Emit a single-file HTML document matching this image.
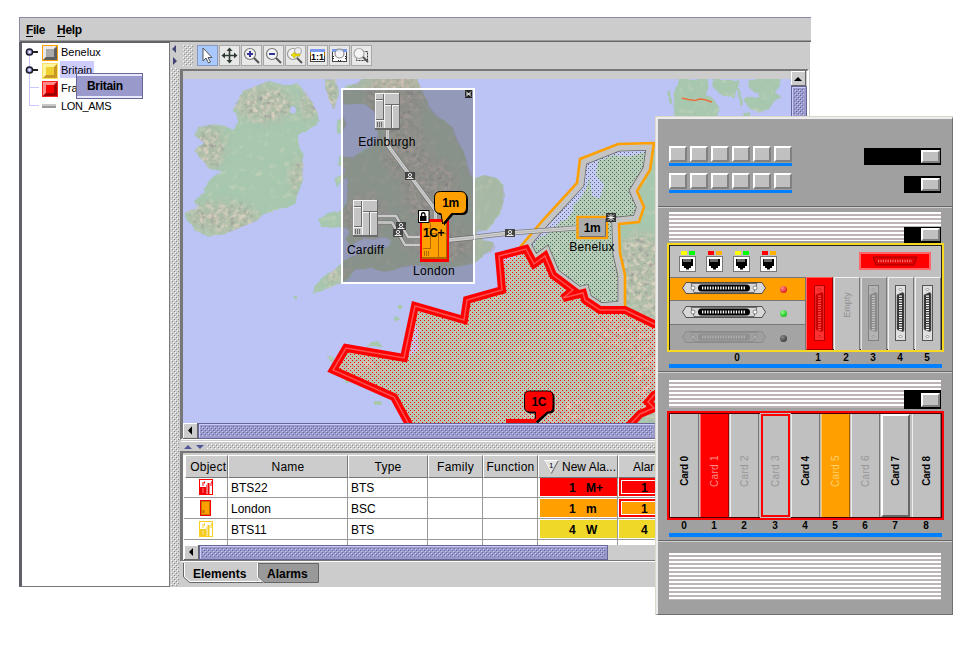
<!DOCTYPE html><html><head><meta charset="utf-8"><title>Network</title><style>
*{box-sizing:border-box;margin:0;padding:0}
html,body{width:980px;height:650px;background:#fff;overflow:hidden}
body{position:relative;font-family:"Liberation Sans",sans-serif;font-size:11px;color:#000}
.a{position:absolute}
#win{left:19px;top:17px;width:791px;height:570px;background:#ccc;border-left:1px solid #8a8aa8;border-top:1px solid #8a8aa8}
.menu{font-weight:bold;font-size:12px;top:23px}
.menu u{text-decoration:none;display:inline-block;height:14px;line-height:14px;border-bottom:1px solid #000}
#tree{left:19px;top:42px;width:151px;height:545px;background:#fff;border-left:3px solid #60606a;border-top:1px solid #60606a;border-right:1px solid #777;border-bottom:1px solid #777}
.tl{font-size:11px;line-height:18px;white-space:nowrap}
.dots{background-image:radial-gradient(circle at 1px 1px,#fff 0.8px,transparent 1px),radial-gradient(circle at 2px 2px,#888 0.8px,transparent 1px);background-size:4px 4px}
.tb{top:45px;width:21px;height:21px;background:#e8e8e8;border:1px solid #a8a8a8}
.hd{top:455px;height:23px;background:#ccc;border-top:1px solid #fff;border-left:1px solid #fff;border-right:1px solid #777;border-bottom:1px solid #777;font-size:12px;text-align:center;line-height:23px;white-space:nowrap;overflow:hidden;letter-spacing:0.25px}
.cell{font-size:12px;line-height:19px;white-space:nowrap}
.sb{background-color:#9999cc;background-image:conic-gradient(#b4b4dc 25%,#9090c4 0 50%,#b4b4dc 0 75%,#9090c4 0);background-size:2px 2px}
.sbtn{background:#ccc;border-top:1px solid #fff;border-left:1px solid #fff;border-right:1px solid #666;border-bottom:1px solid #666}
</style></head><body><div id="win" class="a"></div><div class="a" style="left:810px;top:17px;width:1px;height:25px;background:#ccc;border-top:1px solid #8a8aa8"></div><div class="a" style="left:20px;top:40px;width:791px;height:1px;background:#999"></div><div class="a" style="left:20px;top:41px;width:791px;height:1px;background:#666"></div><div class="a menu" style="left:26px;letter-spacing:-0.45px"><u>F</u>ile</div><div class="a menu" style="left:57px;letter-spacing:-0.3px"><u>H</u>elp</div><div id="tree" class="a"></div><div class="a" style="left:29px;top:56px;width:1px;height:49px;background:#c8c8ff"></div><div class="a" style="left:29px;top:87px;width:10px;height:1px;background:#c8c8ff"></div><div class="a" style="left:29px;top:105px;width:10px;height:1px;background:#c8c8ff"></div><svg class="a" style="left:25px;top:47px" width="14" height="10" viewBox="0 0 14 10"><circle cx="4.5" cy="5" r="3.1" fill="#9c9cdc" stroke="#1a1a2a" stroke-width="1.5"/><circle cx="4.5" cy="5" r="1.1" fill="#fff"/><rect x="8" y="4" width="5" height="2" fill="#222"/></svg><svg class="a" style="left:25px;top:65px" width="14" height="10" viewBox="0 0 14 10"><circle cx="4.5" cy="5" r="3.1" fill="#9c9cdc" stroke="#1a1a2a" stroke-width="1.5"/><circle cx="4.5" cy="5" r="1.1" fill="#fff"/><rect x="8" y="4" width="5" height="2" fill="#222"/></svg><svg class="a" style="left:42px;top:45px" width="16" height="16" viewBox="0 0 16 16"><rect width="16" height="16" fill="#ffa000"/><polygon points="1,1 15,1 1,15" fill="#e8e8e8"/><polygon points="15,1 15,15 1,15" fill="#606060"/><rect x="4" y="4" width="8" height="8" fill="#aaaaaa"/></svg><svg class="a" style="left:42px;top:63px" width="16" height="16" viewBox="0 0 16 16"><rect width="16" height="16" fill="#ffe060"/><polygon points="1,1 15,1 1,15" fill="#fff7a0"/><polygon points="15,1 15,15 1,15" fill="#c89828"/><rect x="4" y="4" width="8" height="8" fill="#f0d030"/></svg><svg class="a" style="left:42px;top:81px" width="16" height="16" viewBox="0 0 16 16"><rect width="16" height="16" fill="#ff2020"/><polygon points="1,1 15,1 1,15" fill="#ff8888"/><polygon points="15,1 15,15 1,15" fill="#a00000"/><rect x="4" y="4" width="8" height="8" fill="#ff0000"/></svg><div class="a" style="left:42px;top:104px;width:14px;height:2px;background:#c8c8c8"></div><div class="a" style="left:42px;top:106px;width:14px;height:2px;background:#999"></div><div class="a" style="left:60px;top:61px;width:34px;height:17px;background:#ccccff"></div><div class="a tl" style="left:61px;top:43px">Benelux</div><div class="a tl" style="left:61px;top:61px">Britain</div><div class="a tl" style="left:61px;top:79px">France</div><div class="a tl" style="left:61px;top:97px;letter-spacing:-0.35px">LON_AMS</div><div class="a" style="left:76px;top:73px;width:67px;height:26px;background:#9999cc;border:1px solid #666699;box-shadow:inset 0 2px 0 #e8e8ff,inset 0 -2px 0 #e8e8ff;font-weight:bold;font-size:12px;line-height:25px;padding-left:10px;letter-spacing:-0.3px">Britain</div><svg class="a" style="left:0;top:0" width="0" height="0"><defs><pattern id="dt" width="4" height="4" patternUnits="userSpaceOnUse"><rect width="4" height="4" fill="#ccc"/><rect x="0" y="0" width="1" height="1" fill="#fff"/><rect x="1" y="1" width="1" height="1" fill="#8c8c8c"/><rect x="2" y="2" width="1" height="1" fill="#fff"/><rect x="3" y="3" width="1" height="1" fill="#8c8c8c"/></pattern><pattern id="st" width="4" height="4" patternUnits="userSpaceOnUse"><rect width="4" height="4" fill="#9999cc"/><rect x="0" y="0" width="1" height="1" fill="#ccccff"/><rect x="1" y="1" width="1" height="1" fill="#666699"/><rect x="2" y="2" width="1" height="1" fill="#ccccff"/><rect x="3" y="3" width="1" height="1" fill="#666699"/></pattern></defs></svg><svg class="a" style="left:171px;top:68px" width="8" height="518"><rect width="8" height="518" fill="url(#dt)"/></svg><svg class="a" style="left:171px;top:42px" width="9" height="26" viewBox="0 0 9 26"><polygon points="5,3 5,11 1,7" fill="#444477"/><polygon points="2,15 2,23 6,19" fill="#444477"/></svg><div class="a" style="left:181px;top:42px;width:629px;height:28px;background:#ccc"></div><svg class="a" style="left:183px;top:45px" width="10" height="21"><rect width="10" height="21" fill="url(#dt)"/></svg><div class="a tb" style="left:197px;background:#a8c8ff;border-color:#8899bb;"></div><div class="a tb" style="left:219px;"></div><div class="a tb" style="left:241px;"></div><div class="a tb" style="left:263px;"></div><div class="a tb" style="left:285px;"></div><div class="a tb" style="left:307px;"></div><div class="a tb" style="left:329px;"></div><div class="a tb" style="left:351px;"></div>
<svg class="a" style="left:197px;top:45px" width="176" height="21" viewBox="0 0 176 21">
<!-- pointer -->
<polygon points="6,3 6,16 9,13 11.5,18 13.5,17 11,12.5 15,12.5" fill="#fff" stroke="#555" stroke-width="1"/>
<!-- move -->
<g stroke="#2e3c32" stroke-width="1.6" fill="none"><path d="M32.5 4v13M26 10.5h13"/></g>
<g fill="#2e3c32"><polygon points="32.5,2.5 29.5,6 35.5,6"/><polygon points="32.5,18.5 29.5,15 35.5,15"/><polygon points="24.5,10.5 28,7.5 28,13.5"/><polygon points="40.5,10.5 37,7.5 37,13.5"/></g>
<!-- zoom in -->
<circle cx="53" cy="9" r="5.5" fill="#f4f4f4" stroke="#777" stroke-width="1.2"/><path d="M57 13l5 5" stroke="#555" stroke-width="2"/><path d="M50 9h6M53 6v6" stroke="#333399" stroke-width="2"/>
<!-- zoom out -->
<circle cx="75" cy="9" r="5.5" fill="#f4f4f4" stroke="#777" stroke-width="1.2"/><path d="M79 13l5 5" stroke="#555" stroke-width="2"/><path d="M72 9h6" stroke="#333399" stroke-width="2"/>
<!-- zoom back -->
<circle cx="96" cy="9" r="5.5" fill="#f4f4f4" stroke="#999" stroke-width="1.2"/><circle cx="101" cy="6" r="3.5" fill="#eee" stroke="#aaa" stroke-width="1"/><path d="M100 13l5 5" stroke="#555" stroke-width="2"/><path d="M94 10l4-3v2h5v2h-5v2z" fill="#f0e000" stroke="#b0a000" stroke-width=".5"/>
<!-- 1:1 -->
<rect x="113.500" y="4.500" width="14" height="12" fill="#fff" stroke="#444" stroke-width="1"/><rect x="113" y="4" width="15" height="3" fill="#7799ee"/><rect x="113" y="7" width="1" height="4" fill="#b07000"/><rect x="127" y="7" width="1" height="4" fill="#b07000"/>
<text x="120.500" y="15" font-family="Liberation Sans,sans-serif" font-size="9" font-weight="bold" text-anchor="middle" fill="#000">1:1</text>
<!-- fit -->
<rect x="135.500" y="4.500" width="14" height="12" fill="#fff" stroke="#444" stroke-width="1"/><rect x="135" y="4" width="15" height="3" fill="#7799ee"/><circle cx="142.500" cy="8.500" r="4.500" fill="#f4f4f4" fill-opacity=".8" stroke="#888" stroke-width="1.2"/><path d="M137 11l-1.500 1.500 1.500 1.500M148 11l1.500 1.500-1.500 1.500M141 15l1.500 1.500 1.500-1.500" stroke="#222" stroke-width="1" fill="none"/>
<!-- zoom area -->
<rect x="159.500" y="6.500" width="11" height="9" fill="none" stroke="#333" stroke-width="1" stroke-dasharray="2 1"/><circle cx="162" cy="8.500" r="5" fill="#f4f4f4" stroke="#aaa" stroke-width="1.200"/><path d="M166 12l5 5" stroke="#555" stroke-width="2"/>
</svg>
<div class="a" style="left:180px;top:69px;width:629px;height:371px;background:#ccc;border-left:3px solid #777;border-top:2px solid #777;border-right:2px solid #fff;border-bottom:2px solid #fff"></div><svg class="a" style="left:183px;top:71px" width="608" height="352" viewBox="183 71 608 352"><defs>
<pattern id="rd" width="4" height="4" patternUnits="userSpaceOnUse"><rect x="0" y="0" width="1" height="1" fill="#f00"/><rect x="2" y="2" width="1" height="1" fill="#f00"/></pattern>
<pattern id="bd" width="4" height="4" patternUnits="userSpaceOnUse"><rect x="0" y="0" width="1" height="1" fill="#4a4a4a"/><rect x="2" y="2" width="1" height="1" fill="#4a4a4a"/></pattern>
<filter id="terr" x="0" y="0" width="100%" height="100%" color-interpolation-filters="sRGB">
<feTurbulence type="fractalNoise" baseFrequency="0.045" numOctaves="3" seed="3" result="dn"/>
<feDisplacementMap in="SourceGraphic" in2="dn" scale="7" xChannelSelector="R" yChannelSelector="G" result="land"/>
<feTurbulence type="fractalNoise" baseFrequency="0.13" numOctaves="2" seed="11" result="n"/>
<feColorMatrix in="n" type="matrix" values="0 0 0 0 0.76  0 0 0 0 0.82  0 0 0 0 0.72  3 0 0 0 -1.75" result="tan"/>
<feMerge result="col"><feMergeNode in="land"/><feMergeNode in="tan"/></feMerge>
<feComposite in="col" in2="land" operator="in"/>
</filter>
<filter id="hills" x="0" y="0" width="100%" height="100%" color-interpolation-filters="sRGB">
<feGaussianBlur in="SourceGraphic" stdDeviation="5" result="m"/>
<feTurbulence type="fractalNoise" baseFrequency="0.21" numOctaves="3" seed="5" result="n"/>
<feColorMatrix in="n" type="matrix" values="0 0 0 0 0.85  0 0 0 0 0.82  0 0 0 0 0.75  3 0 0 0 -1.25" result="tan"/>
<feColorMatrix in="n" type="matrix" values="0 0 0 0 0.56  0 0 0 0 0.54  0 0 0 0 0.56  0 2.2 0 0 -1.22" result="dk0"/>
<feOffset in="dk0" dx="1" dy="1" result="dk"/>
<feComposite in="tan" in2="m" operator="in" result="t2"/>
<feComposite in="dk" in2="m" operator="in" result="d2"/>
<feColorMatrix in="m" type="matrix" values="1 0 0 0 0  0 1 0 0 0  0 0 1 0 0  0 0 0 0.5 0" result="m2"/>
<feMerge><feMergeNode in="m2"/><feMergeNode in="t2"/><feMergeNode in="d2"/></feMerge>
</filter>
<clipPath id="mapclip"><rect x="183" y="79" width="608" height="344"/></clipPath>
</defs><rect x="183" y="79" width="608" height="344" fill="#bbc4f5"/><g clip-path="url(#mapclip)"><g filter="url(#terr)" fill="#a7c7af"><polygon points="269,80 281,85.5 298,84 306,91 311,101 317.5,111.5 319,119.5 314,127 306,131 298,135 299,145.5 303,156 304,166.5 302,179.5 298,190 295.5,203 287.5,208 272,209.5 264,213.5 259,220 243,226.5 225,234.5 209,236 196,232 189.5,221.5 185.5,212 198.5,205.5 193.5,200.5 206.5,194 204,190 212,179.5 222,171.5 209,169 198.5,156 195,151 204,143 195,135 198.5,126 212,123.5 225,126 232.5,128.5 239,121 232.5,110.5 236.5,101 244.5,90.5 256,85.5"/><polygon points="326,79 337,79 339,95 334,110 329,100 325,88"/><polygon points="336,120 344,117 347,124 343,133 337,134"/><polygon points="362,79 417,79 422,90 430,107 441,119 453,127 459,142 465,155 469,168 474,179 485,175 496,178 503,186 505,196 502,208 497,216 492,224 486,230 476,233 474,236 484,240 493,242 496,247 492,252 484,255 478,260 474,264 460,266 440,268 420,266 400,268 385,272 370,268 355,270 342,282 327,290 312,294 316,286 330,274 342,262 352,256 365,250 378,248 390,246 392,240 384,238 374,240 364,239 356,243 350,245 346,240 350,232 346,228 332,229 322,227 320,218 332,212 343,210 347,203 347,181 343,178 335,187 334,178 343,172 343,166 336,165 337,155 343,157 352,156.5 362,154 374,144 378,132 374,112 364,103.5 343,104.7 341,97 345,89 354,84"/><polygon points="340,352 352,346 365,350 380,356 395,358 402,355 412,353 419,348 419,333 416,322 412,309 420,307 430,312 445,317 458,320 464,313 468,302 485,296 498,290 502,275 505,262 515,256 528,250 545,235 560,222 572,208 582,196 588,180 592,168 600,160 615,156 630,156 645,152 657,150 800,146 800,430 412,430 409,423 400,405 392,396 375,388 360,382 345,375 336,368 334,360"/><polygon points="680,79 707,79 709,87 706,94 716,100 719,108 717,118 676,118 673,108 674,97 678,88"/><polygon points="713,79 739,79 740,86 737,90 735,97 732,100 726,97 723,98 716,91 712,86"/><polygon points="748,79 781,79 780,86 775,92 783,95 776,100 769,108 759,112 748,108 742,101 746,97 758,96 759,93 750,90 747,86"/><polygon points="737,88 740,88 742,105 739,106"/><polygon points="743,114 750,113 751,118 744,118"/><polygon points="668,92 671,90 672,104 669,106"/><polygon points="294,297 297,297 297,300 294,300"/><polygon points="392,316 398,315 399,319 393,320"/><polygon points="398,306 402,306 402,309 398,309"/><polygon points="366,349 370,342 380,341 385,347"/><polygon points="327,357 332,356 333,361 328,362"/><polygon points="347,381 351,381 351,384 347,384"/><polygon points="375,401 381,401 381,404 375,404"/></g><clipPath id="landclip"><polygon points="269,80 281,85.5 298,84 306,91 311,101 317.5,111.5 319,119.5 314,127 306,131 298,135 299,145.5 303,156 304,166.5 302,179.5 298,190 295.5,203 287.5,208 272,209.5 264,213.5 259,220 243,226.5 225,234.5 209,236 196,232 189.5,221.5 185.5,212 198.5,205.5 193.5,200.5 206.5,194 204,190 212,179.5 222,171.5 209,169 198.5,156 195,151 204,143 195,135 198.5,126 212,123.5 225,126 232.5,128.5 239,121 232.5,110.5 236.5,101 244.5,90.5 256,85.5"/><polygon points="326,79 337,79 339,95 334,110 329,100 325,88"/><polygon points="336,120 344,117 347,124 343,133 337,134"/><polygon points="362,79 417,79 422,90 430,107 441,119 453,127 459,142 465,155 469,168 474,179 485,175 496,178 503,186 505,196 502,208 497,216 492,224 486,230 476,233 474,236 484,240 493,242 496,247 492,252 484,255 478,260 474,264 460,266 440,268 420,266 400,268 385,272 370,268 355,270 342,282 327,290 312,294 316,286 330,274 342,262 352,256 365,250 378,248 390,246 392,240 384,238 374,240 364,239 356,243 350,245 346,240 350,232 346,228 332,229 322,227 320,218 332,212 343,210 347,203 347,181 343,178 335,187 334,178 343,172 343,166 336,165 337,155 343,157 352,156.5 362,154 374,144 378,132 374,112 364,103.5 343,104.7 341,97 345,89 354,84"/><polygon points="340,352 352,346 365,350 380,356 395,358 402,355 412,353 419,348 419,333 416,322 412,309 420,307 430,312 445,317 458,320 464,313 468,302 485,296 498,290 502,275 505,262 515,256 528,250 545,235 560,222 572,208 582,196 588,180 592,168 600,160 615,156 630,156 645,152 657,150 800,146 800,430 412,430 409,423 400,405 392,396 375,388 360,382 345,375 336,368 334,360"/><polygon points="680,79 707,79 709,87 706,94 716,100 719,108 717,118 676,118 673,108 674,97 678,88"/></clipPath><g clip-path="url(#landclip)"><g filter="url(#hills)" fill="#b4b2a0"><ellipse cx="430" cy="190" rx="28" ry="34"/><ellipse cx="440" cy="245" rx="34" ry="16"/><ellipse cx="395" cy="100" rx="30" ry="28"/><ellipse cx="405" cy="150" rx="22" ry="30"/><ellipse cx="365" cy="215" rx="22" ry="22"/><ellipse cx="335" cy="275" rx="14" ry="8"/><ellipse cx="330" cy="95" rx="10" ry="18"/><ellipse cx="264" cy="104" rx="28" ry="18"/><ellipse cx="210" cy="147" rx="15" ry="20"/><ellipse cx="222" cy="218" rx="36" ry="15"/><ellipse cx="298" cy="177" rx="7" ry="18"/><ellipse cx="309" cy="104" rx="8" ry="16"/><ellipse cx="640" cy="270" rx="26" ry="38"/><ellipse cx="650" cy="360" rx="22" ry="60"/><ellipse cx="560" cy="415" rx="40" ry="18"/><ellipse cx="610" cy="330" rx="20" ry="20"/><ellipse cx="365" cy="365" rx="22" ry="8"/></g></g><g clip-path="url(#landclip)"><rect x="343" y="79" width="165" height="215" fill="#a88480" fill-opacity="0.2"/></g><polyline points="682,98 688,99.500 695,100.500 700,99 704,99.500 712,102" fill="none" stroke="#e8703c" stroke-width="1.500"/><ellipse cx="293" cy="110" rx="3" ry="3.500" fill="#bbc4f5"/><polygon points="590,153 598,160 596,175 604,185 600,198 592,196 590,180 588,165" fill="#bbc4f5"/><polygon points="555,210 566,204 574,210 566,220 556,222" fill="#bbc4f5"/><polygon points="521,246 543,220 577,183 580,159 618,144 654,143 650,170 637,191 644,207 639,222 619,224 620,253 625,275 625,308 600,310 585,300 583,293 563,298 573,290 553,275 545,256 534,264 526,249" fill="#fff" fill-opacity="0.12"/><polygon points="521,246 543,220 577,183 580,159 618,144 654,143 650,170 637,191 644,207 639,222 619,224 620,253 625,275 625,308 600,310 585,300 583,293 563,298 573,290 553,275 545,256 534,264 526,249" fill="url(#bd)" fill-opacity="0.8"/><clipPath id="bclip"><polygon points="521,246 543,220 577,183 580,159 618,144 654,143 650,170 637,191 644,207 639,222 619,224 620,253 625,275 625,308 600,310 585,300 583,293 563,298 573,290 553,275 545,256 534,264 526,249"/></clipPath><g clip-path="url(#bclip)"><polygon points="521,246 543,220 577,183 580,159 618,144 654,143 650,170 637,191 644,207 639,222 619,224 620,253 625,275 625,308 600,310 585,300 583,293 563,298 573,290 553,275 545,256 534,264 526,249" fill="none" stroke="#666" stroke-width="15" stroke-linejoin="miter"/><polygon points="521,246 543,220 577,183 580,159 618,144 654,143 650,170 637,191 644,207 639,222 619,224 620,253 625,275 625,308 600,310 585,300 583,293 563,298 573,290 553,275 545,256 534,264 526,249" fill="none" stroke="#c4c4c4" stroke-width="13.500" stroke-linejoin="miter"/></g><polygon points="521,246 543,220 577,183 580,159 618,144 654,143 650,170 637,191 644,207 639,222 619,224 620,253 625,275 625,308 600,310 585,300 583,293 563,298 573,290 553,275 545,256 534,264 526,249" fill="none" stroke="#ffa000" stroke-width="2.600" stroke-linejoin="miter"/><polygon points="333,370 346,348 404,358 415,306 464,320 467,300 502,290 499,256 526,249 534,264 545,256 553,275 573,290 563,298 583,293 585,300 600,310 625,310 654,324 700,330 700,380 654,395 648,402 654,408 640,414 625,430 412,430 394,397" fill="#dcc4bc" fill-opacity="0.33"/><polygon points="333,370 346,348 404,358 415,306 464,320 467,300 502,290 499,256 526,249 534,264 545,256 553,275 573,290 563,298 583,293 585,300 600,310 625,310 654,324 700,330 700,380 654,395 648,402 654,408 640,414 625,430 412,430 394,397" fill="url(#rd)"/><polygon points="333,370 346,348 404,358 415,306 464,320 467,300 502,290 499,256 526,249 534,264 545,256 553,275 573,290 563,298 583,293 585,300 600,310 625,310 654,324 700,330 700,380 654,395 648,402 654,408 640,414 625,430 412,430 394,397" fill="none" stroke="#f00" stroke-width="8" stroke-linejoin="miter"/><polygon points="333,370 346,348 404,358 415,306 464,320 467,300 502,290 499,256 526,249 534,264 545,256 553,275 573,290 563,298 583,293 585,300 600,310 625,310 654,324 700,330 700,380 654,395 648,402 654,408 640,414 625,430 412,430 394,397" fill="none" stroke="#ff5050" stroke-width="1.500" stroke-linejoin="miter"/><g font-family="Liberation Sans,sans-serif"><polyline points="449,240 510,233 576,228" fill="none" stroke="#777" stroke-width="5" stroke-linejoin="round"/><polyline points="449,240 510,233 576,228" fill="none" stroke="#d4d4d4" stroke-width="3.4" stroke-linejoin="round"/><polyline points="449,240 510,233 576,228" fill="none" stroke="#bdbdbd" stroke-width="1.6" stroke-linejoin="round"/><rect x="342" y="89" width="132" height="194" fill="#5c5c66" fill-opacity="0.42" stroke="#fff" stroke-width="2"/><polyline points="387.5,130 387.5,145 435.5,210 435.5,222" fill="none" stroke="#777" stroke-width="5" stroke-linejoin="round"/><polyline points="387.5,130 387.5,145 435.5,210 435.5,222" fill="none" stroke="#d4d4d4" stroke-width="3.4" stroke-linejoin="round"/><polyline points="387.5,130 387.5,145 435.5,210 435.5,222" fill="none" stroke="#bdbdbd" stroke-width="1.6" stroke-linejoin="round"/><polyline points="378,216 396,216 408,237 421,237" fill="none" stroke="#777" stroke-width="4" stroke-linejoin="round"/><polyline points="378,216 396,216 408,237 421,237" fill="none" stroke="#d4d4d4" stroke-width="2.4" stroke-linejoin="round"/><polyline points="378,216 396,216 408,237 421,237" fill="none" stroke="#bdbdbd" stroke-width="0.8" stroke-linejoin="round"/><polyline points="378,222.5 392,222.5 405,245 421,245" fill="none" stroke="#777" stroke-width="4" stroke-linejoin="round"/><polyline points="378,222.5 392,222.5 405,245 421,245" fill="none" stroke="#d4d4d4" stroke-width="2.4" stroke-linejoin="round"/><polyline points="378,222.5 392,222.5 405,245 421,245" fill="none" stroke="#bdbdbd" stroke-width="0.8" stroke-linejoin="round"/><polyline points="449,240 474,237.5" fill="none" stroke="#777" stroke-width="5" stroke-linejoin="round"/><polyline points="449,240 474,237.5" fill="none" stroke="#d4d4d4" stroke-width="3.4" stroke-linejoin="round"/><polyline points="449,240 474,237.5" fill="none" stroke="#bdbdbd" stroke-width="1.6" stroke-linejoin="round"/><g transform="translate(405,172)"><rect width="10" height="8" fill="#444"/><circle cx="5" cy="3" r="1.6" fill="none" stroke="#fff" stroke-width="0.9"/><path d="M1.500 6.500h7M3 6.300l1.200-1.300M7 6.300l-1.200-1.300" stroke="#fff" stroke-width="0.9" fill="none"/></g><g transform="translate(396,222)"><rect width="10" height="8" fill="#444"/><circle cx="5" cy="3" r="1.6" fill="none" stroke="#fff" stroke-width="0.9"/><path d="M1.500 6.500h7M3 6.300l1.200-1.300M7 6.300l-1.200-1.300" stroke="#fff" stroke-width="0.9" fill="none"/></g><g transform="translate(393,229)"><rect width="10" height="8" fill="#444"/><circle cx="5" cy="3" r="1.6" fill="none" stroke="#fff" stroke-width="0.9"/><path d="M1.500 6.500h7M3 6.300l1.200-1.300M7 6.300l-1.200-1.300" stroke="#fff" stroke-width="0.9" fill="none"/></g><g transform="translate(505,229)"><rect width="10" height="8" fill="#444"/><circle cx="5" cy="3" r="1.6" fill="none" stroke="#fff" stroke-width="0.9"/><path d="M1.500 6.500h7M3 6.300l1.200-1.300M7 6.300l-1.200-1.300" stroke="#fff" stroke-width="0.9" fill="none"/></g><g transform="translate(375,93)"><rect x="0" y="0" width="25" height="37" fill="#c4c4c4"/><rect x="0" y="0" width="25" height="1" fill="#f4f4f4"/><rect x="0" y="0" width="1" height="37" fill="#f4f4f4"/><rect x="24" y="0" width="1" height="37" fill="#6a6a6a"/><rect x="0" y="35" width="25" height="2" fill="#6a6a6a"/><rect x="1" y="6" width="7" height="1" fill="#6a6a6a"/><rect x="1" y="7" width="7" height="1" fill="#f4f4f4"/><rect x="1" y="26" width="8" height="1" fill="#6a6a6a"/><rect x="1" y="27" width="8" height="1" fill="#f4f4f4"/><rect x="8" y="1" width="1" height="26" fill="#6a6a6a"/><rect x="9" y="1" width="1" height="34" fill="#f4f4f4"/><rect x="2" y="29" width="1" height="5" fill="#6a6a6a"/><rect x="4" y="29" width="1" height="5" fill="#6a6a6a"/><rect x="6" y="29" width="1" height="5" fill="#6a6a6a"/><rect x="10" y="11" width="14" height="1" fill="#6a6a6a"/><rect x="10" y="12" width="14" height="1" fill="#f4f4f4"/><rect x="16" y="12" width="1" height="23" fill="#6a6a6a"/><rect x="17" y="12" width="1" height="23" fill="#f4f4f4"/></g><g transform="translate(353,200)"><rect x="0" y="0" width="25" height="37" fill="#c4c4c4"/><rect x="0" y="0" width="25" height="1" fill="#f4f4f4"/><rect x="0" y="0" width="1" height="37" fill="#f4f4f4"/><rect x="24" y="0" width="1" height="37" fill="#6a6a6a"/><rect x="0" y="35" width="25" height="2" fill="#6a6a6a"/><rect x="1" y="6" width="7" height="1" fill="#6a6a6a"/><rect x="1" y="7" width="7" height="1" fill="#f4f4f4"/><rect x="1" y="26" width="8" height="1" fill="#6a6a6a"/><rect x="1" y="27" width="8" height="1" fill="#f4f4f4"/><rect x="8" y="1" width="1" height="26" fill="#6a6a6a"/><rect x="9" y="1" width="1" height="34" fill="#f4f4f4"/><rect x="2" y="29" width="1" height="5" fill="#6a6a6a"/><rect x="4" y="29" width="1" height="5" fill="#6a6a6a"/><rect x="6" y="29" width="1" height="5" fill="#6a6a6a"/><rect x="10" y="11" width="14" height="1" fill="#6a6a6a"/><rect x="10" y="12" width="14" height="1" fill="#f4f4f4"/><rect x="16" y="12" width="1" height="23" fill="#6a6a6a"/><rect x="17" y="12" width="1" height="23" fill="#f4f4f4"/></g><rect x="420" y="219" width="29" height="43" fill="#f00"/><g transform="translate(422,222)"><rect x="0" y="0" width="25" height="37" fill="#ffa000"/><rect x="0" y="0" width="25" height="1" fill="#ffa000"/><rect x="0" y="0" width="1" height="37" fill="#ffa000"/><rect x="24" y="0" width="1" height="37" fill="#b06800"/><rect x="0" y="35" width="25" height="2" fill="#b06800"/><rect x="1" y="6" width="7" height="1" fill="#b06800"/><rect x="1" y="7" width="7" height="1" fill="#ffa000"/><rect x="1" y="26" width="8" height="1" fill="#b06800"/><rect x="1" y="27" width="8" height="1" fill="#ffa000"/><rect x="8" y="1" width="1" height="26" fill="#b06800"/><rect x="9" y="1" width="1" height="34" fill="#ffa000"/><rect x="2" y="29" width="1" height="5" fill="#b06800"/><rect x="4" y="29" width="1" height="5" fill="#b06800"/><rect x="6" y="29" width="1" height="5" fill="#b06800"/><rect x="10" y="11" width="14" height="1" fill="#b06800"/><rect x="10" y="12" width="14" height="1" fill="#ffa000"/><rect x="16" y="12" width="1" height="23" fill="#b06800"/><rect x="17" y="12" width="1" height="23" fill="#ffa000"/></g><rect x="577.500" y="217" width="29.500" height="21" fill="#ababab" stroke="#ffa000" stroke-width="2.400"/><path d="M579.500 236.500h26v-17.500" fill="none" stroke="#707070" stroke-width="1"/><text x="592" y="231.500" font-size="12" font-weight="bold" text-anchor="middle" letter-spacing="-0.3">1m</text><rect x="606" y="213" width="10" height="9" fill="#333"/><path d="M608 214.500l6 6M614 214.500l-6 6M611 214v7M607.500 217.500h7" stroke="#fff" stroke-width="0.9"/><rect x="465" y="90" width="7" height="8" fill="#222"/><path d="M466 91.500l5 5M471 91.500l-5 5M466 94h5" stroke="#fff" stroke-width="0.9"/><rect x="418.500" y="210.500" width="10.500" height="12" fill="#fff" stroke="#000" stroke-width="1"/><rect x="420" y="216" width="6.500" height="5" fill="#000"/><path d="M421.500 216v-1.500a1.750 1.750 0 0 1 3.500 0v1.500" fill="none" stroke="#000" stroke-width="1.300"/><path d="M442.0,193.0 H462.0 Q468.0,193.0 468.0,199.0 V209.0 Q468.0,215.0 462.0,215.0 H453.0 L444.2,225.5 L442.5,215.0 H442.0 Q436.0,215.0 436.0,209.0 V199.0 Q436.0,193.0 442.0,193.0 Z" fill="#000"/><path d="M440.5,191.5 H460.5 Q466.5,191.5 466.5,197.5 V207.5 Q466.5,213.5 460.5,213.5 H451.5 L442.7,224 L441,213.5 H440.5 Q434.5,213.5 434.5,207.5 V197.5 Q434.5,191.5 440.5,191.5 Z" fill="#ffa000" stroke="#000" stroke-width="1"/><text x="450.5" y="206.82" font-size="12" font-weight="bold" text-anchor="middle" letter-spacing="-0.4" fill="#000">1m</text><text x="423" y="237" font-size="12" font-weight="bold" letter-spacing="-0.4">1C+</text><path d="M531.0,392.5 H549.5 Q554.5,392.5 554.5,397.5 V408.5 Q554.5,413.5 549.5,413.5 H548.5 L536.5,424.5 L537.0,413.5 H531.0 Q526.0,413.5 526.0,408.5 V397.5 Q526.0,392.5 531.0,392.5 Z" fill="#000"/><path d="M529.5,391 H548.0 Q553.0,391 553.0,396 V407 Q553.0,412 548.0,412 H547 L535,423 L535.5,412 H529.5 Q524.5,412 524.5,407 V396 Q524.5,391 529.5,391 Z" fill="#f00" stroke="#000" stroke-width="1"/><text x="538.75" y="405.82" font-size="12" font-weight="bold" text-anchor="middle" letter-spacing="-0.4" fill="#000">1C</text><rect x="506" y="419" width="30" height="6" fill="#f00"/><text x="387" y="146" font-size="12" text-anchor="middle" letter-spacing="0.3">Edinburgh</text><text x="365.500" y="254" font-size="12" text-anchor="middle" letter-spacing="0.3">Cardiff</text><text x="434" y="275" font-size="12" text-anchor="middle" letter-spacing="0.3">London</text><text x="592" y="251" font-size="12" text-anchor="middle" letter-spacing="0.3">Benelux</text></g></g></svg><div class="a" style="left:791px;top:71px;width:16px;height:352px;background:#ccc;border-left:1px solid #888"></div><div class="a" style="left:183px;top:423px;width:624px;height:15px;background:#ccc;border-top:1px solid #888"></div><div class="a" style="left:183px;top:423px;width:608px;height:16px;background:#ccc;"></div><svg class="a" style="left:183px;top:423px" width="15" height="16" viewBox="0 0 15 15" preserveAspectRatio="none"><rect width="15" height="15" fill="#ccc"/><rect width="15" height="1" fill="#fff"/><rect width="1" height="15" fill="#fff"/><rect x="14" width="1" height="15" fill="#666"/><rect y="14" width="15" height="1" fill="#666"/><polygon points="9,3 9,11 5,7" fill="#000"/></svg><svg class="a" style="left:198px;top:423px" width="458" height="16"><rect width="458" height="16" fill="#9999cc"/><rect x="3" y="3" width="452" height="10" fill="url(#st)"/><rect x="0.500" y="0.500" width="457" height="15" fill="none" stroke="#666699" stroke-width="1"/><path d="M1.500 14.5V1.500H456.5" fill="none" stroke="#ccccff" stroke-width="1"/></svg><svg class="a" style="left:791px;top:71px" width="15" height="15" viewBox="0 0 15 15" preserveAspectRatio="none"><rect width="15" height="15" fill="#ccc"/><rect width="15" height="1" fill="#fff"/><rect width="1" height="15" fill="#fff"/><rect x="14" width="1" height="15" fill="#666"/><rect y="14" width="15" height="1" fill="#666"/><polygon points="3,10 11,10 7,6" fill="#000"/></svg><svg class="a" style="left:791px;top:86px" width="16" height="32"><rect width="16" height="32" fill="#9999cc"/><rect x="3" y="3" width="10" height="26" fill="url(#st)"/><rect x="0.500" y="0.500" width="15" height="31" fill="none" stroke="#666699" stroke-width="1"/><path d="M1.500 30.5V1.500H14.5" fill="none" stroke="#ccccff" stroke-width="1"/></svg><div class="a" style="left:181px;top:441px;width:630px;height:10px;background:#ccc;border-top:1px solid #fff"></div><svg class="a" style="left:207px;top:444px" width="604" height="5"><rect width="604" height="5" fill="url(#dt)"/></svg><svg class="a" style="left:183px;top:442px" width="24" height="9" viewBox="0 0 24 9"><polygon points="1,7 9,7 5,3" fill="#555599"/><polygon points="13,3 21,3 17,7" fill="#555599"/></svg><div class="a" style="left:180px;top:451px;width:480px;height:110px;background:#fff;border-left:3px solid #777;border-top:2px solid #777"></div><div class="a" style="left:183px;top:453px;width:480px;height:2px;background:#ccc;"></div><div class="a hd" style="left:185px;width:43px">&nbsp;Object</div><div class="a hd" style="left:228px;width:120px">Name</div><div class="a hd" style="left:348px;width:80px">Type</div><div class="a hd" style="left:428px;width:55px">Family</div><div class="a hd" style="left:483px;width:55px">Function</div><div class="a hd" style="left:538px;width:80px"></div><div class="a hd" style="left:618px;width:60px"></div><div class="a" style="left:562px;top:457px;font-size:12px;line-height:21px;white-space:nowrap">New Ala...</div><div class="a" style="left:633px;top:457px;font-size:12px;line-height:21px;white-space:nowrap;width:23px;overflow:hidden">Alarms</div><svg class="a" style="left:543px;top:459px" width="17" height="16" viewBox="0 0 17 16"><path d="M1.500 1.500h14l-7 13z" fill="#e4e4e4" stroke="#8a8a8a" stroke-width="1"/><path d="M1 1.500h14.500M2 2l6.500 12" stroke="#fff" stroke-width="1" fill="none"/><path d="M15 2l-6.500 12" stroke="#777" stroke-width="1" fill="none"/><text x="8.200" y="9" font-size="8" font-family="Liberation Sans,sans-serif" text-anchor="middle" fill="#000">1</text></svg><div class="a" style="left:184px;top:497px;width:476px;height:1px;background:#999;"></div><div class="a" style="left:184px;top:518px;width:476px;height:1px;background:#999;"></div><div class="a" style="left:184px;top:539px;width:476px;height:1px;background:#999;"></div><div class="a" style="left:227px;top:478px;width:1px;height:67px;background:#999;"></div><div class="a" style="left:347px;top:478px;width:1px;height:67px;background:#999;"></div><div class="a" style="left:427px;top:478px;width:1px;height:67px;background:#999;"></div><div class="a" style="left:482px;top:478px;width:1px;height:67px;background:#999;"></div><div class="a" style="left:537px;top:478px;width:1px;height:67px;background:#999;"></div><div class="a" style="left:617px;top:478px;width:1px;height:67px;background:#999;"></div><div class="a cell" style="left:231px;top:479px">BTS22</div><div class="a cell" style="left:351px;top:479px">BTS</div><div class="a" style="left:540px;top:478px;width:77px;height:18px;background:#ff0000;"></div><div class="a cell" style="left:569px;top:479px;font-weight:bold">1</div><div class="a cell" style="left:586px;top:479px;font-weight:bold">M+</div><div class="a" style="left:619px;top:478px;width:45px;height:18px;background:#ff0000;border:2px solid #f00;box-shadow:inset 0 0 0 1px #fff"></div><div class="a cell" style="left:641px;top:479px;font-weight:bold">1</div><div class="a cell" style="left:231px;top:500px">London</div><div class="a cell" style="left:351px;top:500px">BSC</div><div class="a" style="left:540px;top:499px;width:77px;height:18px;background:#ffa000;"></div><div class="a cell" style="left:569px;top:500px;font-weight:bold">1</div><div class="a cell" style="left:586px;top:500px;font-weight:bold">m</div><div class="a" style="left:619px;top:499px;width:45px;height:18px;background:#ffa000;border:2px solid #f00;box-shadow:inset 0 0 0 1px #fff"></div><div class="a cell" style="left:641px;top:500px;font-weight:bold">1</div><div class="a cell" style="left:231px;top:521px">BTS11</div><div class="a cell" style="left:351px;top:521px">BTS</div><div class="a" style="left:540px;top:520px;width:77px;height:18px;background:#f0d828;"></div><div class="a cell" style="left:569px;top:521px;font-weight:bold">4</div><div class="a cell" style="left:586px;top:521px;font-weight:bold">W</div><div class="a" style="left:619px;top:520px;width:45px;height:18px;background:#f0d828;"></div><div class="a cell" style="left:641px;top:521px;font-weight:bold">4</div><svg class="a" style="left:199px;top:479px" width="14" height="16" viewBox="0 0 14 16"><rect x="0.500" y="0.500" width="13" height="15" fill="#fff" stroke="#f00" stroke-width="1"/><rect x="1" y="8" width="6" height="7" fill="#f00000"/><rect x="3.500" y="9" width="1" height="5" fill="#fff" fill-opacity=".5"/><rect x="8.500" y="4" width="2" height="11" fill="#f00000"/><rect x="7" y="6" width="1" height="9" fill="#f00000" fill-opacity=".6"/><path d="M4 3v4M5.500 2.500v2M12 4v3M12.500 2.500v1.500" stroke="#f00000" stroke-width="1" fill="none"/></svg><svg class="a" style="left:200px;top:500px" width="11" height="16" viewBox="0 0 11 16"><rect x="0.500" y="0.500" width="10" height="15" fill="#ffa000" stroke="#f00" stroke-width="1"/><rect x="1.500" y="1.500" width="8" height="13" fill="none" stroke="#b87000" stroke-width="0.800"/><rect x="2.500" y="10" width="2" height="3" fill="#b87000"/></svg><svg class="a" style="left:199px;top:521px" width="14" height="16" viewBox="0 0 14 16"><rect x="0.500" y="0.500" width="13" height="15" fill="#fff" stroke="#f8d020" stroke-width="1"/><rect x="1" y="8" width="6" height="7" fill="#f4cc20"/><rect x="3.500" y="9" width="1" height="5" fill="#fff" fill-opacity=".5"/><rect x="8.500" y="4" width="2" height="11" fill="#f4cc20"/><rect x="7" y="6" width="1" height="9" fill="#f4cc20" fill-opacity=".6"/><path d="M4 3v4M5.500 2.500v2M12 4v3M12.500 2.500v1.500" stroke="#f4cc20" stroke-width="1" fill="none"/></svg><div class="a" style="left:199px;top:541px;width:14px;height:4px;background:#ddd;"></div><div class="a" style="left:184px;top:540px;width:476px;height:5px;background:#fff;"></div><div class="a" style="left:227px;top:540px;width:1px;height:5px;background:#999;"></div><div class="a" style="left:347px;top:540px;width:1px;height:5px;background:#999;"></div><div class="a" style="left:427px;top:540px;width:1px;height:5px;background:#999;"></div><div class="a" style="left:482px;top:540px;width:1px;height:5px;background:#999;"></div><div class="a" style="left:537px;top:540px;width:1px;height:5px;background:#999;"></div><div class="a" style="left:617px;top:540px;width:1px;height:5px;background:#999;"></div><div class="a" style="left:184px;top:545px;width:476px;height:15px;background:#ccc;"></div><svg class="a" style="left:184px;top:545px" width="15" height="15" viewBox="0 0 15 15" preserveAspectRatio="none"><rect width="15" height="15" fill="#ccc"/><rect width="15" height="1" fill="#fff"/><rect width="1" height="15" fill="#fff"/><rect x="14" width="1" height="15" fill="#666"/><rect y="14" width="15" height="1" fill="#666"/><polygon points="9,3 9,11 5,7" fill="#000"/></svg><svg class="a" style="left:199px;top:545px" width="409" height="15"><rect width="409" height="15" fill="#9999cc"/><rect x="3" y="3" width="403" height="9" fill="url(#st)"/><rect x="0.500" y="0.500" width="408" height="14" fill="none" stroke="#666699" stroke-width="1"/><path d="M1.500 13.5V1.500H407.5" fill="none" stroke="#ccccff" stroke-width="1"/></svg><svg class="a" style="left:181px;top:560px" width="480" height="27" viewBox="0 0 480 27"><rect x="0" y="0" width="480" height="1" fill="#777"/><rect x="0" y="1" width="480" height="1" fill="#fff"/><path d="M77 3.500H137.500V22.500H83L77 17Z" fill="#999" stroke="#666" stroke-width="1"/><path d="M76.500 3V17L82 22.500" fill="none" stroke="#fff" stroke-width="1"/><path d="M2.500 3V17L8.500 22.500H82" fill="none" stroke="#666" stroke-width="1"/><path d="M3.500 3V16.500L9 21.500H80" fill="none" stroke="#fff" stroke-width="1"/></svg><div class="a" style="left:193px;top:567px;font-size:12px;font-weight:bold;line-height:14px">Elements</div><div class="a" style="left:267px;top:567px;font-size:12px;font-weight:bold;line-height:14px">Alarms</div><div class="a" style="left:655px;top:116px;width:298px;height:499px;background:#a0a0a0;border-left:3px solid #ececec;border-top:3px solid #ececec;border-right:1px solid #707070;border-bottom:1px solid #707070;box-shadow:inset 1px 1px 0 -0 #a0a0a0"></div><div class="a" style="left:655px;top:116px;width:298px;height:1px;background:#dcd8d0;"></div><div class="a" style="left:655px;top:116px;width:1px;height:499px;background:#dcd8d0;"></div><div class="a" style="left:658px;top:206px;width:294px;height:1px;background:#666;"></div><div class="a" style="left:658px;top:207px;width:294px;height:1px;background:#d0d0d0;"></div><div class="a" style="left:658px;top:371px;width:294px;height:1px;background:#666;"></div><div class="a" style="left:658px;top:372px;width:294px;height:1px;background:#d0d0d0;"></div><div class="a" style="left:658px;top:540px;width:294px;height:1px;background:#666;"></div><div class="a" style="left:658px;top:541px;width:294px;height:1px;background:#d0d0d0;"></div><div class="a" style="left:669px;top:146px;width:18px;height:16px;background:#c0c0c0;border-top:2px solid #fff;border-left:2px solid #fff;border-right:2px solid #808080;border-bottom:2px solid #808080"></div><div class="a" style="left:690px;top:146px;width:18px;height:16px;background:#c0c0c0;border-top:2px solid #fff;border-left:2px solid #fff;border-right:2px solid #808080;border-bottom:2px solid #808080"></div><div class="a" style="left:711px;top:146px;width:18px;height:16px;background:#c0c0c0;border-top:2px solid #fff;border-left:2px solid #fff;border-right:2px solid #808080;border-bottom:2px solid #808080"></div><div class="a" style="left:732px;top:146px;width:18px;height:16px;background:#c0c0c0;border-top:2px solid #fff;border-left:2px solid #fff;border-right:2px solid #808080;border-bottom:2px solid #808080"></div><div class="a" style="left:753px;top:146px;width:18px;height:16px;background:#c0c0c0;border-top:2px solid #fff;border-left:2px solid #fff;border-right:2px solid #808080;border-bottom:2px solid #808080"></div><div class="a" style="left:774px;top:146px;width:18px;height:16px;background:#c0c0c0;border-top:2px solid #fff;border-left:2px solid #fff;border-right:2px solid #808080;border-bottom:2px solid #808080"></div><div class="a" style="left:669px;top:163px;width:123px;height:3px;background:#0080ff;"></div><div class="a" style="left:669px;top:173px;width:18px;height:16px;background:#c0c0c0;border-top:2px solid #fff;border-left:2px solid #fff;border-right:2px solid #808080;border-bottom:2px solid #808080"></div><div class="a" style="left:690px;top:173px;width:18px;height:16px;background:#c0c0c0;border-top:2px solid #fff;border-left:2px solid #fff;border-right:2px solid #808080;border-bottom:2px solid #808080"></div><div class="a" style="left:711px;top:173px;width:18px;height:16px;background:#c0c0c0;border-top:2px solid #fff;border-left:2px solid #fff;border-right:2px solid #808080;border-bottom:2px solid #808080"></div><div class="a" style="left:732px;top:173px;width:18px;height:16px;background:#c0c0c0;border-top:2px solid #fff;border-left:2px solid #fff;border-right:2px solid #808080;border-bottom:2px solid #808080"></div><div class="a" style="left:753px;top:173px;width:18px;height:16px;background:#c0c0c0;border-top:2px solid #fff;border-left:2px solid #fff;border-right:2px solid #808080;border-bottom:2px solid #808080"></div><div class="a" style="left:774px;top:173px;width:18px;height:16px;background:#c0c0c0;border-top:2px solid #fff;border-left:2px solid #fff;border-right:2px solid #808080;border-bottom:2px solid #808080"></div><div class="a" style="left:669px;top:190px;width:123px;height:3px;background:#0080ff;"></div><div class="a" style="left:864px;top:148px;width:77px;height:17px;background:#000;"></div><div class="a" style="left:921px;top:150px;width:19px;height:13px;background:#c0c0c0;border-top:2px solid #fff;border-left:2px solid #fff;border-right:2px solid #808080;border-bottom:2px solid #808080"></div><div class="a" style="left:904px;top:176px;width:37px;height:17px;background:#000;"></div><div class="a" style="left:921px;top:178px;width:19px;height:13px;background:#c0c0c0;border-top:2px solid #fff;border-left:2px solid #fff;border-right:2px solid #808080;border-bottom:2px solid #808080"></div><div class="a" style="left:669px;top:212px;width:272px;height:29px;background:#b8b8b8;background-image:repeating-linear-gradient(to bottom,#fff 0,#fff 2px,#bcb4b4 2px,#bcb4b4 4px)"></div><div class="a" style="left:904px;top:227px;width:37px;height:16px;background:#000;"></div><div class="a" style="left:921px;top:228px;width:19px;height:13px;background:#c0c0c0;border-top:2px solid #fff;border-left:2px solid #fff;border-right:2px solid #808080;border-bottom:2px solid #808080"></div><div class="a" style="left:667px;top:243px;width:277px;height:109px;background:#c0c0c0;border:2px solid #f8d820;box-shadow:inset 0 0 0 1px #222"></div><svg class="a" style="left:679px;top:256px" width="17" height="16" viewBox="0 0 17 16"><rect x="0.500" y="0.500" width="16" height="15" fill="#fff" stroke="#777" stroke-width="1"/><path d="M3 3h11v7h-2v2h-2v1.500h-3v-1.500h-2v-2h-2z" fill="#000"/><path d="M5 3v3M7 3v3M9 3v3M11 3v3" stroke="#fff" stroke-width="0.800"/></svg><div class="a" style="left:681px;top:251px;width:6px;height:4px;background:#ffff00;"></div><div class="a" style="left:689px;top:251px;width:6px;height:4px;background:#00ff00;"></div><svg class="a" style="left:706px;top:256px" width="17" height="16" viewBox="0 0 17 16"><rect x="0.500" y="0.500" width="16" height="15" fill="#fff" stroke="#777" stroke-width="1"/><path d="M3 3h11v7h-2v2h-2v1.500h-3v-1.500h-2v-2h-2z" fill="#000"/><path d="M5 3v3M7 3v3M9 3v3M11 3v3" stroke="#fff" stroke-width="0.800"/></svg><div class="a" style="left:708px;top:251px;width:6px;height:4px;background:#ff0000;"></div><div class="a" style="left:716px;top:251px;width:6px;height:4px;background:#ffb000;"></div><svg class="a" style="left:733px;top:256px" width="17" height="16" viewBox="0 0 17 16"><rect x="0.500" y="0.500" width="16" height="15" fill="#fff" stroke="#777" stroke-width="1"/><path d="M3 3h11v7h-2v2h-2v1.500h-3v-1.500h-2v-2h-2z" fill="#000"/><path d="M5 3v3M7 3v3M9 3v3M11 3v3" stroke="#fff" stroke-width="0.800"/></svg><div class="a" style="left:735px;top:251px;width:6px;height:4px;background:#ffff00;"></div><div class="a" style="left:743px;top:251px;width:6px;height:4px;background:#00ff00;"></div><svg class="a" style="left:760px;top:256px" width="17" height="16" viewBox="0 0 17 16"><rect x="0.500" y="0.500" width="16" height="15" fill="#fff" stroke="#777" stroke-width="1"/><path d="M3 3h11v7h-2v2h-2v1.500h-3v-1.500h-2v-2h-2z" fill="#000"/><path d="M5 3v3M7 3v3M9 3v3M11 3v3" stroke="#fff" stroke-width="0.800"/></svg><div class="a" style="left:762px;top:251px;width:6px;height:4px;background:#ff0000;"></div><div class="a" style="left:770px;top:251px;width:6px;height:4px;background:#ffb000;"></div><div class="a" style="left:859px;top:252px;width:72px;height:18px;background:#f00;border:2px solid #ff6868"></div><svg class="a" style="left:871px;top:256px" width="48" height="10" viewBox="0 0 48 10"><path d="M2 1h44l-3 8h-38z" fill="#e00000" stroke="#a00000" stroke-width="1"/><path d="M7 5h34" stroke="#ff7070" stroke-width="2.500" stroke-dasharray="1.200 1.200"/></svg><div class="a" style="left:670px;top:277px;width:135px;height:24px;background:#ffa000;border-bottom:1px solid #777;border-top:1px solid #777"></div><div class="a" style="left:670px;top:301px;width:135px;height:24px;background:#c0c0c0;border-bottom:1px solid #777"></div><div class="a" style="left:670px;top:325px;width:135px;height:25px;background:#a4a4a4;"></div><div class="a" style="left:805px;top:277px;width:1px;height:73px;background:#777;"></div><svg class="a" style="left:682px;top:281px" width="84" height="14" viewBox="0 0 84 14"><path d="M4 1.500h76l3.500 5.500-3.500 5.500h-76l-3.500-5.500z" fill="#d8d8d8" stroke="#444" stroke-width="0.9"/><path d="M9 2.500h66l-3 9h-60z" fill="#d8d8d8" stroke="#444" stroke-width="0.7"/><rect x="16" y="3.500" width="52" height="7" rx="3.500" fill="#000"/><path d="M20 7h44" stroke="#fff" stroke-width="3" stroke-dasharray="1.300 1.300"/><circle cx="11" cy="7" r="2" fill="#fff" stroke="#444" stroke-width="0.6"/><circle cx="73" cy="7" r="2" fill="#fff" stroke="#444" stroke-width="0.6"/></svg><svg class="a" style="left:682px;top:305px" width="84" height="14" viewBox="0 0 84 14"><path d="M4 1.500h76l3.500 5.500-3.500 5.500h-76l-3.500-5.500z" fill="#d8d8d8" stroke="#444" stroke-width="0.9"/><path d="M9 2.500h66l-3 9h-60z" fill="#d8d8d8" stroke="#444" stroke-width="0.7"/><rect x="16" y="3.500" width="52" height="7" rx="3.500" fill="#000"/><path d="M20 7h44" stroke="#fff" stroke-width="3" stroke-dasharray="1.300 1.300"/><circle cx="11" cy="7" r="2" fill="#fff" stroke="#444" stroke-width="0.6"/><circle cx="73" cy="7" r="2" fill="#fff" stroke="#444" stroke-width="0.6"/></svg><svg class="a" style="left:682px;top:330px" width="84" height="14" viewBox="0 0 84 14"><path d="M4 1.500h76l3.500 5.500-3.500 5.500h-76l-3.500-5.500z" fill="#a0a0a0" stroke="#888" stroke-width="0.9"/><path d="M9 2.500h66l-3 9h-60z" fill="#a0a0a0" stroke="#888" stroke-width="0.7"/><rect x="16" y="3.500" width="52" height="7" rx="3.500" fill="#909090"/><path d="M20 7h44" stroke="#b0b0b0" stroke-width="3" stroke-dasharray="1.300 1.300"/><circle cx="11" cy="7" r="2" fill="#b0b0b0" stroke="#888" stroke-width="0.6"/><circle cx="73" cy="7" r="2" fill="#b0b0b0" stroke="#888" stroke-width="0.6"/></svg><div class="a" style="left:780px;top:286px;width:7px;height:7px;border-radius:50%;background:radial-gradient(circle at 35% 30%,#ff9090,#e02020 70%)"></div><div class="a" style="left:780px;top:310px;width:7px;height:7px;border-radius:50%;background:radial-gradient(circle at 35% 30%,#90ff90,#20c020 70%)"></div><div class="a" style="left:780px;top:335px;width:7px;height:7px;border-radius:50%;background:radial-gradient(circle at 35% 30%,#888,#444 70%)"></div><div class="a" style="left:806px;top:277px;width:27px;height:73px;background:#f00;border-left:1px solid #ff6060;border-top:1px solid #ff6060;border-right:1px solid #900;border-bottom:1px solid #900"></div><svg class="a" style="left:813px;top:285px" width="13" height="56" viewBox="0 0 13 56"><rect x="1.500" y="0.500" width="10" height="55" fill="#ff3030" stroke="#b00000" stroke-width="1"/><path d="M4 9.500q-1 0-1 1v33q0 1 1 1.500l4.500 1.500q1.500 0 1.500-1.500v-36q0-1.500-1.500-1.500z" fill="#d00000" stroke="#b00000" stroke-width="0.6"/><path d="M6.500 10.500v35" stroke="#ff5050" stroke-width="3" stroke-dasharray="1.200 1.200"/><path d="M6.500 3l1.500 1.500-1.500 1.500-1.500-1.500zM6.500 50l1.500 1.500-1.500 1.500-1.500-1.500z" fill="#ff5050" stroke="#b00000" stroke-width="0.6"/></svg><div class="a" style="left:834px;top:277px;width:26px;height:73px;background:#c0c0c0;border-left:1px solid #f0f0f0;border-top:1px solid #f0f0f0;border-right:1px solid #777"></div><div class="a" style="left:822px;top:298px;width:50px;height:14px;line-height:14px;text-align:center;font-size:9px;font-weight:normal;color:#909090;transform:rotate(-90deg);white-space:nowrap;letter-spacing:0px">Empty</div><div class="a" style="left:861px;top:277px;width:26px;height:73px;background:#aaa;border-left:1px solid #ddd;border-top:1px solid #ddd;border-right:1px solid #777"></div><svg class="a" style="left:867px;top:285px" width="13" height="56" viewBox="0 0 13 56"><rect x="1.500" y="0.500" width="10" height="55" fill="#b4b4b4" stroke="#808080" stroke-width="1"/><path d="M4 9.500q-1 0-1 1v33q0 1 1 1.500l4.500 1.500q1.500 0 1.500-1.500v-36q0-1.500-1.500-1.500z" fill="#8c8c8c" stroke="#808080" stroke-width="0.6"/><path d="M6.500 10.500v35" stroke="#c4c4c4" stroke-width="3" stroke-dasharray="1.200 1.200"/><path d="M6.500 3l1.500 1.500-1.500 1.500-1.500-1.500zM6.500 50l1.500 1.500-1.500 1.500-1.500-1.500z" fill="#c4c4c4" stroke="#808080" stroke-width="0.6"/></svg><div class="a" style="left:888px;top:277px;width:26px;height:73px;background:#c0c0c0;border-left:1px solid #f0f0f0;border-top:1px solid #f0f0f0;border-right:1px solid #777"></div><svg class="a" style="left:894px;top:285px" width="13" height="56" viewBox="0 0 13 56"><rect x="1.500" y="0.500" width="10" height="55" fill="#e0e0e0" stroke="#555" stroke-width="1"/><path d="M4 9.500q-1 0-1 1v33q0 1 1 1.500l4.500 1.500q1.500 0 1.500-1.500v-36q0-1.500-1.500-1.500z" fill="#333" stroke="#555" stroke-width="0.6"/><path d="M6.500 10.500v35" stroke="#fff" stroke-width="3" stroke-dasharray="1.200 1.200"/><path d="M6.500 3l1.500 1.500-1.500 1.500-1.500-1.500zM6.500 50l1.500 1.500-1.500 1.500-1.500-1.500z" fill="#fff" stroke="#555" stroke-width="0.6"/></svg><div class="a" style="left:915px;top:277px;width:26px;height:73px;background:#c0c0c0;border-left:1px solid #f0f0f0;border-top:1px solid #f0f0f0;border-right:1px solid #777"></div><svg class="a" style="left:921px;top:285px" width="13" height="56" viewBox="0 0 13 56"><rect x="1.500" y="0.500" width="10" height="55" fill="#e0e0e0" stroke="#555" stroke-width="1"/><path d="M4 9.500q-1 0-1 1v33q0 1 1 1.500l4.500 1.500q1.500 0 1.500-1.500v-36q0-1.500-1.500-1.500z" fill="#333" stroke="#555" stroke-width="0.6"/><path d="M6.500 10.500v35" stroke="#fff" stroke-width="3" stroke-dasharray="1.200 1.200"/><path d="M6.500 3l1.500 1.500-1.500 1.500-1.500-1.500zM6.500 50l1.500 1.500-1.500 1.500-1.500-1.500z" fill="#fff" stroke="#555" stroke-width="0.6"/></svg><div class="a" style="left:727px;top:352px;width:20px;height:12px;line-height:12px;text-align:center;font-size:10px;font-weight:bold;color:#000">0</div><div class="a" style="left:808px;top:352px;width:20px;height:12px;line-height:12px;text-align:center;font-size:10px;font-weight:bold;color:#000">1</div><div class="a" style="left:836px;top:352px;width:20px;height:12px;line-height:12px;text-align:center;font-size:10px;font-weight:bold;color:#000">2</div><div class="a" style="left:863px;top:352px;width:20px;height:12px;line-height:12px;text-align:center;font-size:10px;font-weight:bold;color:#000">3</div><div class="a" style="left:890px;top:352px;width:20px;height:12px;line-height:12px;text-align:center;font-size:10px;font-weight:bold;color:#000">4</div><div class="a" style="left:917px;top:352px;width:20px;height:12px;line-height:12px;text-align:center;font-size:10px;font-weight:bold;color:#000">5</div><div class="a" style="left:669px;top:364px;width:273px;height:4px;background:#0080ff;"></div><div class="a" style="left:669px;top:380px;width:272px;height:28px;background:#b8b8b8;background-image:repeating-linear-gradient(to bottom,#fff 0,#fff 2px,#bcb4b4 2px,#bcb4b4 4px)"></div><div class="a" style="left:904px;top:390px;width:37px;height:19px;background:#000;"></div><div class="a" style="left:921px;top:393px;width:19px;height:14px;background:#c0c0c0;border-top:2px solid #fff;border-left:2px solid #fff;border-right:2px solid #808080;border-bottom:2px solid #808080"></div><div class="a" style="left:667px;top:411px;width:277px;height:109px;background:#c0c0c0;border:2px solid #f00;box-shadow:inset 0 0 0 1px #400"></div><div class="a" style="left:670px;top:414px;width:29px;height:103px;background:#c0c0c0;border-left:1px solid #eee;border-right:1px solid #777;"></div><div class="a" style="left:660px;top:464px;width:50px;height:14px;line-height:14px;text-align:center;font-size:10px;font-weight:bold;color:#000;transform:rotate(-90deg);white-space:nowrap;letter-spacing:-0.3px">Card 0</div><div class="a" style="left:674px;top:520px;width:20px;height:12px;line-height:12px;text-align:center;font-size:10px;font-weight:bold;color:#000">0</div><div class="a" style="left:700px;top:414px;width:29px;height:103px;background:#ff0000;border-left:1px solid #ff6060;border-right:1px solid #900;"></div><div class="a" style="left:690px;top:464px;width:50px;height:14px;line-height:14px;text-align:center;font-size:10px;font-weight:normal;color:#ff8c8c;transform:rotate(-90deg);white-space:nowrap;letter-spacing:0.3px">Card 1</div><div class="a" style="left:704px;top:520px;width:20px;height:12px;line-height:12px;text-align:center;font-size:10px;font-weight:bold;color:#000">1</div><div class="a" style="left:730px;top:414px;width:29px;height:103px;background:#c0c0c0;border-left:1px solid #eee;border-right:1px solid #777;"></div><div class="a" style="left:720px;top:464px;width:50px;height:14px;line-height:14px;text-align:center;font-size:10px;font-weight:normal;color:#969696;transform:rotate(-90deg);white-space:nowrap;letter-spacing:0.3px">Card 2</div><div class="a" style="left:734px;top:520px;width:20px;height:12px;line-height:12px;text-align:center;font-size:10px;font-weight:bold;color:#000">2</div><div class="a" style="left:761px;top:414px;width:29px;height:103px;background:#c0c0c0;border:2px solid #f00;box-shadow:0 0 0 1px #c0c0c0;"></div><div class="a" style="left:751px;top:464px;width:50px;height:14px;line-height:14px;text-align:center;font-size:10px;font-weight:normal;color:#969696;transform:rotate(-90deg);white-space:nowrap;letter-spacing:0.3px">Card 3</div><div class="a" style="left:765px;top:520px;width:20px;height:12px;line-height:12px;text-align:center;font-size:10px;font-weight:bold;color:#000">3</div><div class="a" style="left:791px;top:414px;width:29px;height:103px;background:#c0c0c0;border-left:1px solid #eee;border-right:1px solid #777;"></div><div class="a" style="left:781px;top:464px;width:50px;height:14px;line-height:14px;text-align:center;font-size:10px;font-weight:bold;color:#000;transform:rotate(-90deg);white-space:nowrap;letter-spacing:-0.3px">Card 4</div><div class="a" style="left:795px;top:520px;width:20px;height:12px;line-height:12px;text-align:center;font-size:10px;font-weight:bold;color:#000">4</div><div class="a" style="left:821px;top:414px;width:29px;height:103px;background:#ffa000;border-left:1px solid #ffc860;border-right:1px solid #a86000;"></div><div class="a" style="left:811px;top:464px;width:50px;height:14px;line-height:14px;text-align:center;font-size:10px;font-weight:normal;color:#ffd070;transform:rotate(-90deg);white-space:nowrap;letter-spacing:0.3px">Card 5</div><div class="a" style="left:825px;top:520px;width:20px;height:12px;line-height:12px;text-align:center;font-size:10px;font-weight:bold;color:#000">5</div><div class="a" style="left:851px;top:414px;width:29px;height:103px;background:#c0c0c0;border-left:1px solid #eee;border-right:1px solid #777;"></div><div class="a" style="left:841px;top:464px;width:50px;height:14px;line-height:14px;text-align:center;font-size:10px;font-weight:normal;color:#969696;transform:rotate(-90deg);white-space:nowrap;letter-spacing:0.3px">Card 6</div><div class="a" style="left:855px;top:520px;width:20px;height:12px;line-height:12px;text-align:center;font-size:10px;font-weight:bold;color:#000">6</div><div class="a" style="left:881px;top:414px;width:29px;height:103px;background:#c0c0c0;border-left:2px solid #fff;border-top:2px solid #fff;border-right:2px solid #666;border-bottom:2px solid #666;"></div><div class="a" style="left:871px;top:464px;width:50px;height:14px;line-height:14px;text-align:center;font-size:10px;font-weight:bold;color:#000;transform:rotate(-90deg);white-space:nowrap;letter-spacing:-0.3px">Card 7</div><div class="a" style="left:885px;top:520px;width:20px;height:12px;line-height:12px;text-align:center;font-size:10px;font-weight:bold;color:#000">7</div><div class="a" style="left:912px;top:414px;width:29px;height:103px;background:#c0c0c0;border-left:1px solid #eee;border-right:1px solid #777;"></div><div class="a" style="left:902px;top:464px;width:50px;height:14px;line-height:14px;text-align:center;font-size:10px;font-weight:bold;color:#000;transform:rotate(-90deg);white-space:nowrap;letter-spacing:-0.3px">Card 8</div><div class="a" style="left:916px;top:520px;width:20px;height:12px;line-height:12px;text-align:center;font-size:10px;font-weight:bold;color:#000">8</div><div class="a" style="left:669px;top:533px;width:273px;height:4px;background:#0080ff;"></div><div class="a" style="left:669px;top:553px;width:272px;height:47px;background:#b8b8b8;background-image:repeating-linear-gradient(to bottom,#fff 0,#fff 2px,#bcb4b4 2px,#bcb4b4 4px)"></div></body></html>
